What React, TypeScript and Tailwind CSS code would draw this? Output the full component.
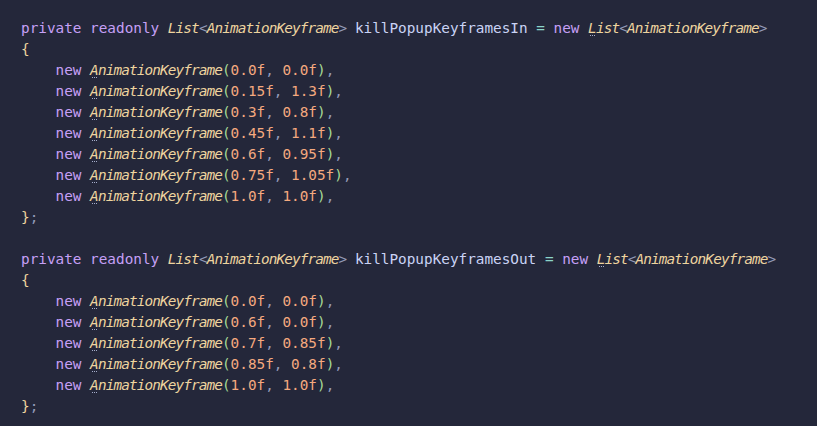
import React from "react";

type Pair = [string, string];

const blockIn: Pair[] = [
  ["0.0f", "0.0f"],
  ["0.15f", "1.3f"],
  ["0.3f", "0.8f"],
  ["0.45f", "1.1f"],
  ["0.6f", "0.95f"],
  ["0.75f", "1.05f"],
  ["1.0f", "1.0f"],
];

const blockOut: Pair[] = [
  ["0.0f", "0.0f"],
  ["0.6f", "0.0f"],
  ["0.7f", "0.85f"],
  ["0.85f", "0.8f"],
  ["1.0f", "1.0f"],
];

function Kw({ children }: { children: React.ReactNode }) {
  return <span className="text-[#c6a0f6]">{children}</span>;
}

function P({ children }: { children: React.ReactNode }) {
  return <span className="text-[#939ab7]">{children}</span>;
}

// the three tiny hint dots under the first letter
function Dots() {
  return (
    <span className="absolute left-[2px] top-full mt-[-1px] flex gap-px">
      <span className="w-px h-px bg-[#a5adcb]" />
      <span className="w-px h-px bg-[#a5adcb]" />
      <span className="w-px h-px bg-[#a5adcb]" />
    </span>
  );
}

function Ty({ name, dots }: { name: string; dots?: boolean }) {
  return (
    <span className="italic text-[#eed49f] tracking-[-0.88px]">
      {dots ? (
        <span className="relative">
          {name[0]}
          <Dots />
        </span>
      ) : (
        name[0]
      )}
      {name.slice(1)}
    </span>
  );
}

function Generic({ dots }: { dots?: boolean }) {
  return (
    <span className="italic tracking-[-0.88px]">
      <Ty name="List" dots={dots} />
      <P>&lt;</P>
      <Ty name="AnimationKeyframe" />
      <P>&gt;</P>
    </span>
  );
}

function Field({ name }: { name: string }) {
  return (
    <div>
      <Kw>private</Kw> <Kw>readonly</Kw> <Generic />{" "}
      <span className="text-[#cad3f5]">{name}</span>{" "}
      <span className="text-[#8bd5ca]">=</span> <Kw>new</Kw> <Generic dots />
    </div>
  );
}

function Row({ a, b }: { a: string; b: string }) {
  return (
    <div>
      {"    "}
      <Kw>new</Kw> <Ty name="AnimationKeyframe" dots />
      <span className="text-[#a6da95]">(</span>
      <span className="text-[#f5a97f]">{a}</span>
      <P>, </P>
      <span className="text-[#f5a97f]">{b}</span>
      <span className="text-[#a6da95]">)</span>
      <P>,</P>
    </div>
  );
}

function Block({ name, rows }: { name: string; rows: Pair[] }) {
  return (
    <>
      <Field name={name} />
      <div className="text-[#eed49f]">{"{"}</div>
      {rows.map(([a, b], i) => (
        <Row key={i} a={a} b={b} />
      ))}
      <div>
        <span className="text-[#eed49f]">{"}"}</span>
        <P>;</P>
      </div>
    </>
  );
}

export default function App() {
  return (
    <div className="min-h-screen w-full bg-[#24273a] pt-[18px] pl-[21px] font-['DejaVu_Sans_Mono',monospace] text-[14.35px] leading-[21px] whitespace-pre text-[#cad3f5]">
      <Block name="killPopupKeyframesIn" rows={blockIn} />
      <div>&nbsp;</div>
      <Block name="killPopupKeyframesOut" rows={blockOut} />
    </div>
  );
}
